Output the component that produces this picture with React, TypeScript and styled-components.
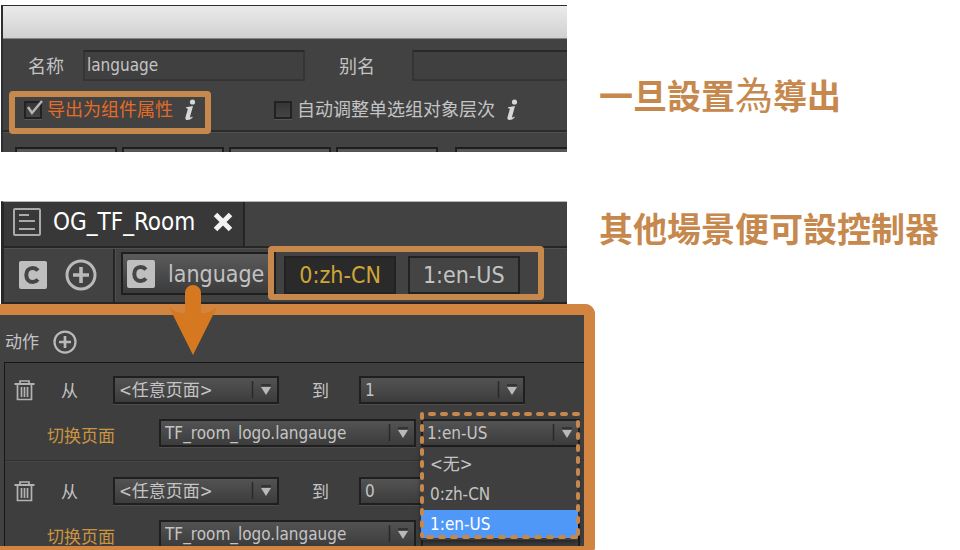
import React from "react";
import styled, { createGlobalStyle } from "styled-components";

const latin = '"DejaVu Sans Condensed", "Noto Sans CJK SC", sans-serif';
const accent = "#c6884c";

const GlobalStyle = createGlobalStyle`
  *, *::before, *::after { box-sizing: border-box; }
  body { margin: 0; background: #fff; font-family: ${latin}; color: #c4c4c4; }
  button, input, select { font: inherit; color: inherit; }
`;

const Page = styled.main`
  display: grid;
  grid-template-columns: minmax(0, 595fr) minmax(0, 365fr);
  height: 100vh;
  overflow: hidden;
`;

const Column = styled.div`
  display: flex;
  flex-direction: column;
  min-height: 0;
`;

const Captions = styled.div`
  display: flex;
  flex-direction: column;
  gap: 83px;
  padding: 70px 0 0 4px;
`;

const Caption = styled.p`
  margin: 0;
  font-family: "Noto Sans CJK TC", sans-serif;
  font-size: 34px;
  line-height: 50px;
  font-weight: 700;
  color: ${accent};
  white-space: nowrap;
`;

const LightGlyph = styled.span`
  font-size: 38px;
  line-height: 38px;
  font-weight: 400;
`;

/* Properties panel */

const Properties = styled.section`
  margin: 5px 28px 49px 1px;
  height: 147px;
  flex: none;
  overflow: hidden;
  background: #424242;
  border-left: 2px solid #2c2f31;
  font-size: 18px;
  line-height: 26px;
`;

const TitleBar = styled.header`
  height: 34px;
  border-top: 1px solid #2e2e2e;
  border-bottom: 1px solid #868686;
  background: linear-gradient(#ebebeb, #d0d0d0);
`;

const FieldRow = styled.div`
  display: grid;
  grid-template-columns: 55px 222px 34px 73px 1fr;
  align-items: center;
  padding: 11px 0 0 25px;
`;

const FieldLabel = styled.label`
  padding-top: 2px;
  white-space: nowrap;
  &:nth-of-type(2) { grid-column: 4; }
`;

const TextField = styled.input<{ $open?: boolean }>`
  width: 100%;
  height: 31px;
  padding: 0 4px 2px 2px;
  border: 2px solid #353535;
  border-top-color: #292929;
  border-right-width: ${(p) => (p.$open ? 0 : 2)}px;
  background: #404040;
  font-size: 17px;
  outline: none;
`;

const OptionRow = styled.div`
  display: flex;
  gap: 48px;
  height: 41px;
  margin-top: 10px;
  padding-left: 6px;
  border-bottom: 2px solid #2b2b2b;
  box-shadow: 0 1px #505050;
`;

const Option = styled.div<{ $marked?: boolean }>`
  display: flex;
  align-items: center;
  flex: none;
  height: 43px;
  padding: 0 8px 5px 9px;
  border: 6px solid ${(p) => (p.$marked ? accent : "transparent")};
  border-radius: 4px;
  color: ${(p) => (p.$marked ? "#e56b28" : "#c4c4c4")};
  z-index: 1;
`;

const Tick = styled.input`
  appearance: none;
  width: 18px;
  height: 18px;
  margin: 0 5px 0 0;
  border: 2px solid #222;
  background: linear-gradient(#363636, #444);
  box-shadow: 0 1px #555;
`;

const TickWrap = styled.label`
  position: relative;
  display: flex;
  align-items: center;
  white-space: nowrap;
`;

const TickMark = styled.svg`
  position: absolute;
  left: 0;
  top: 1px;
`;

const InfoButton = styled.button`
  display: flex;
  margin: 0 0 0 10px;
  padding: 0;
  border: 0;
  background: none;
`;

const Strip = styled.div`
  display: grid;
  grid-template-columns: repeat(4, 102px) 1fr;
  column-gap: 5px;
  padding: 15px 0 0 12px;
`;

const StripButton = styled.button`
  height: 24px;
  border: 2px solid #1e1e1e;
  background: #565656;
  &:last-child { margin-left: 12px; border-right: 0; }
`;

/* Scene editor */

const Editor = styled.section`
  position: relative;
  flex: none;
  margin: 0 28px 0 1px;
  border-left: 3px solid #252829;
  border-top: 1px solid #b4b8b8;
  background: #424242;
  color: #c2c2c2;
  font-size: 23px;
  line-height: 30px;
`;

const TabBar = styled.div`
  display: flex;
  height: 46px;
  border-bottom: 2px solid #262626;
`;

const Tab = styled.div`
  display: flex;
  align-items: center;
  padding: 0 10px 4px 9px;
  border-right: 2px solid #242424;
  background: #383838;
  color: #fff;
`;

const TabName = styled.span`
  margin: 0 18px 0 12px;
  font-size: 24px;
  white-space: nowrap;
`;

const IconButton = styled.button`
  display: flex;
  padding: 0;
  border: 0;
  background: none;
`;

const Toolbar = styled.div`
  display: flex;
  align-items: center;
  height: 56px;
  border-top: 1px solid #505050;
  border-bottom: 2px solid #262626;
`;

const Tools = styled.div`
  display: flex;
  align-items: center;
  gap: 18px;
  align-self: stretch;
  padding: 0 16px 2px 15px;
  border-right: 2px solid #252525;
  box-shadow: 1px 0 #505050;
`;

const ControllerButton = styled.button`
  display: flex;
  align-items: center;
  gap: 13px;
  height: 43px;
  flex: none;
  margin: 0 0 4px 6px;
  padding: 0 10px 0 4px;
  border: 2px solid #1f1f1f;
  background: linear-gradient(#5b5b5b, #3b3b3b);
`;

const PageGroup = styled.div`
  display: flex;
  gap: 12px;
  flex: none;
  height: 54px;
  margin: -6px 0 0 -8px;
  padding: 4px 18px 0 10px;
  border: 6px solid ${accent};
  border-radius: 4px;
`;

const PageButton = styled.button<{ $active?: boolean }>`
  height: 38px;
  padding: 0 13px;
  border: 2px solid #222;
  background: ${(p) => (p.$active ? "#2a2a2a" : "#444")};
  color: ${(p) => (p.$active ? "#cfa638" : "#c2c2c2")};
  white-space: nowrap;
`;

const Arrow = styled.svg`
  position: absolute;
  left: 164px;
  top: 82px;
  z-index: 2;
`;

/* Transition actions */

const Actions = styled.section`
  flex: 1 1 0;
  display: flex;
  flex-direction: column;
  min-height: 0;
  border: solid #d18540;
  border-width: 11px 11px 4px 0;
  border-radius: 0 10px 2px 0;
  background: #424242;
  font-size: 17px;
  line-height: 24px;
  overflow: hidden;
`;

const ActionsHeader = styled.header`
  display: flex;
  align-items: center;
  gap: 14px;
  flex: none;
  height: 47px;
  padding: 7px 0 0 5px;
`;

const ActionList = styled.div`
  flex: 1;
  margin-left: 4px;
  border-top: 1px solid #171717;
  border-left: 1px solid #171717;
  background: #3e3e3e;
`;

const Action = styled.div`
  height: 97px;
  padding-top: 13px;
  & + & {
    border-top: 1px solid #303030;
    box-shadow: inset 0 1px #454545;
    padding-top: 16px;
  }
`;

const FromRow = styled.div`
  display: flex;
  align-items: center;
  padding-left: 9px;
`;

const Word = styled.span<{ $before: number; $after: number }>`
  margin: 2px ${(p) => p.$after}px 0 ${(p) => p.$before}px;
`;

const TargetRow = styled.div`
  display: flex;
  align-items: center;
  gap: 5px;
  margin-top: 14px;
  padding-left: 42px;
`;

const ActionName = styled.span`
  width: 107px;
  padding-top: 6px;
  color: #cb9440;
`;

const SelectBox = styled.div<{ $width: number }>`
  position: relative;
  flex: none;
  width: ${(p) => p.$width}px;
  height: 28px;
`;

const Select = styled.select`
  appearance: none;
  display: block;
  width: 100%;
  height: 28px;
  padding: 0 28px 1px 4px;
  border: 2px solid #1f1f1f;
  border-radius: 0;
  background: linear-gradient(#535353, #3c3c3c);
  box-shadow: 0 1px #4c4c4c;
  outline: none;
`;

const SelectArrow = styled.svg`
  position: absolute;
  right: 4px;
  top: 4px;
  pointer-events: none;
`;

const Menu = styled.ul`
  position: absolute;
  left: 0;
  top: 28px;
  z-index: 3;
  width: 157px;
  margin: 0;
  padding: 3px 0 2px;
  list-style: none;
  background: #3f3f3f;
  box-shadow: 0 2px 5px rgba(0, 0, 0, 0.5);
`;

const MenuItem = styled.li<{ $chosen?: boolean }>`
  height: ${(p) => (p.$chosen ? 28 : 30)}px;
  padding: 2px 0 0 9px;
  background: ${(p) => (p.$chosen ? "#5098f8" : "transparent")};
  color: ${(p) => (p.$chosen ? "#fff" : "#c4c4c4")};
`;

const DashedFrame = styled.svg`
  position: absolute;
  left: -1px;
  top: -8px;
  z-index: 4;
  pointer-events: none;
`;

const InfoIcon = () => (
  <svg width="14" height="22" viewBox="0 0 14 22" fill="#d4d8da" aria-hidden="true">
    <circle cx="9.5" cy="3" r="2.6" />
    <path d="M3 8.2 10 7 7.2 17.2q-.4 1.6.6 1.2l1.4-.9.5.9Q7.200 21 4.400 21 1.800 21 2.500 18.200L4.800 10.200Q5 9.200 3 9.300Z" />
  </svg>
);

const PlusIcon = ({ size }: { size: number }) => (
  <svg width={size} height={size} viewBox="0 0 32 32" fill="none" stroke="#b9b9b9" strokeWidth="3" aria-hidden="true">
    <circle cx="16" cy="16" r="14" />
    <path d="M16 8v16M8 16h16" strokeWidth="3.600" />
  </svg>
);

const ControllerIcon = () => (
  <svg width="28" height="28" viewBox="0 0 28 28" aria-hidden="true">
    <rect width="28" height="28" rx="2" fill="#bfbfbf" />
    <path d="M19 9.500C17.500 7.800 16 7 13.800 7 9.800 7 7.300 9.800 7.300 14s2.500 7 6.500 7c2.200 0 3.700-.8 5.200-2.500" fill="none" stroke="#464646" strokeWidth="4" />
  </svg>
);

const DocumentIcon = () => (
  <svg width="28" height="28" viewBox="0 0 28 28" fill="none" stroke="#aaa" strokeWidth="2" aria-hidden="true">
    <rect x="1" y="1" width="26" height="26" rx="1" />
    <path d="M6 7h10M6 13h16M6 21h16" />
  </svg>
);

const CloseIcon = () => (
  <svg width="20" height="20" viewBox="0 0 20 20" stroke="#f2f2f2" strokeWidth="5" aria-hidden="true">
    <path d="M2.500 2.500 17.500 17.500M17.500 2.500 2.500 17.500" />
  </svg>
);

const TrashIcon = () => (
  <svg width="21" height="21" viewBox="0 0 21 21" fill="none" stroke="#b2b2b2" strokeWidth="1.700" aria-hidden="true">
    <path d="M.5 4h20" strokeWidth="2" />
    <path d="M6 3V1h9v2M3.500 4.500v15h14v-15M7.500 7v10M10.500 7v10M13.500 7v10" />
  </svg>
);

type DropDownProps = {
  label: string;
  width: number;
  value: string;
  children?: React.ReactNode;
};

const DropDown = ({ label, width, value, children }: DropDownProps) => (
  <SelectBox $width={width}>
    <Select aria-label={label} defaultValue={value}>
      <option>{value}</option>
    </Select>
    <SelectArrow width="24" height="20" viewBox="0 0 24 20" aria-hidden="true">
      <path d="M1.500 1v17" stroke="#292929" strokeWidth="1.500" />
      <path d="M10 5h10" stroke="#2d2d2d" strokeWidth="1.500" />
      <path d="M10 7h10l-5 8z" fill="#b9b9b9" />
    </SelectArrow>
    {children}
  </SelectBox>
);

const PageMenu = () => (
  <>
    <Menu role="listbox" aria-label="页面">
      <MenuItem role="option">&lt;无&gt;</MenuItem>
      <MenuItem role="option">0:zh-CN</MenuItem>
      <MenuItem role="option" aria-selected="true" $chosen>1:en-US</MenuItem>
    </Menu>
    <DashedFrame width="160" height="128" viewBox="0 0 160 128" aria-hidden="true">
      <g fill="none" stroke={accent} strokeWidth="4" strokeLinecap="round" strokeDasharray="4 8">
        <path d="M2 3v122" />
        <path d="M10 3h148v122" />
        <path d="M8 126h148" />
      </g>
    </DashedFrame>
  </>
);

const TransitionAction = ({ to, page, open }: { to: string; page: string; open?: boolean }) => (
  <Action>
    <FromRow>
      <IconButton type="button" aria-label="删除"><TrashIcon /></IconButton>
      <Word $before={26} $after={35}>从</Word>
      <DropDown label="从" width={166} value="<任意页面>" />
      <Word $before={33} $after={30}>到</Word>
      <DropDown label="到" width={166} value={to} />
    </FromRow>
    <TargetRow>
      <ActionName>切换页面</ActionName>
      <DropDown label="控制器" width={257} value="TF_room_logo.langauge" />
      <DropDown label="页面" width={159} value={page}>{open && <PageMenu />}</DropDown>
    </TargetRow>
  </Action>
);

export default function App() {
  return (
    <>
      <GlobalStyle />
      <Page>
        <Column>
          <Properties>
            <TitleBar />
            <FieldRow>
              <FieldLabel htmlFor="name">名称</FieldLabel>
              <TextField id="name" defaultValue="language" />
              <FieldLabel htmlFor="alias">别名</FieldLabel>
              <TextField id="alias" $open />
            </FieldRow>
            <OptionRow>
              <Option $marked>
                <TickWrap>
                  <Tick type="checkbox" defaultChecked />
                  <TickMark width="20" height="20" viewBox="0 0 20 20" aria-hidden="true">
                    <path d="M4 9 8 15 18 3" fill="none" stroke="#b5b5b5" strokeWidth="2.500" />
                  </TickMark>
                  导出为组件属性
                </TickWrap>
                <InfoButton type="button" aria-label="说明"><InfoIcon /></InfoButton>
              </Option>
              <Option>
                <TickWrap>
                  <Tick type="checkbox" />
                  自动调整单选组对象层次
                </TickWrap>
                <InfoButton type="button" aria-label="说明"><InfoIcon /></InfoButton>
              </Option>
            </OptionRow>
            <Strip>
              {[1, 2, 3, 4, 5].map((n) => <StripButton key={n} type="button" aria-label={`${n}`} />)}
            </Strip>
          </Properties>

          <Editor>
            <TabBar>
              <Tab>
                <DocumentIcon />
                <TabName>OG_TF_Room</TabName>
                <IconButton type="button" aria-label="关闭"><CloseIcon /></IconButton>
              </Tab>
            </TabBar>
            <Toolbar>
              <Tools>
                <IconButton type="button" aria-label="控制器"><ControllerIcon /></IconButton>
                <IconButton type="button" aria-label="添加控制器"><PlusIcon size={32} /></IconButton>
              </Tools>
              <ControllerButton type="button"><ControllerIcon />language</ControllerButton>
              <PageGroup>
                <PageButton type="button" $active>0:zh-CN</PageButton>
                <PageButton type="button">1:en-US</PageButton>
              </PageGroup>
            </Toolbar>
            <Arrow width="50" height="71" viewBox="0 0 50 71" fill="#d67820" aria-hidden="true">
              <path d="M17 9a8 8 0 0 1 16 0V29Q41 30 49 23L25 71 1 23Q9 30 17 29Z" />
            </Arrow>
          </Editor>

          <Actions>
            <ActionsHeader>
              动作
              <IconButton type="button" aria-label="添加动作"><PlusIcon size={24} /></IconButton>
            </ActionsHeader>
            <ActionList>
              <TransitionAction to="1" page="1:en-US" open />
              <TransitionAction to="0" page="0:zh-CN" />
            </ActionList>
          </Actions>
        </Column>

        <Captions>
          <Caption>一旦設置<LightGlyph>為</LightGlyph>導出</Caption>
          <Caption>其他場景便可設控制器</Caption>
        </Captions>
      </Page>
    </>
  );
}
